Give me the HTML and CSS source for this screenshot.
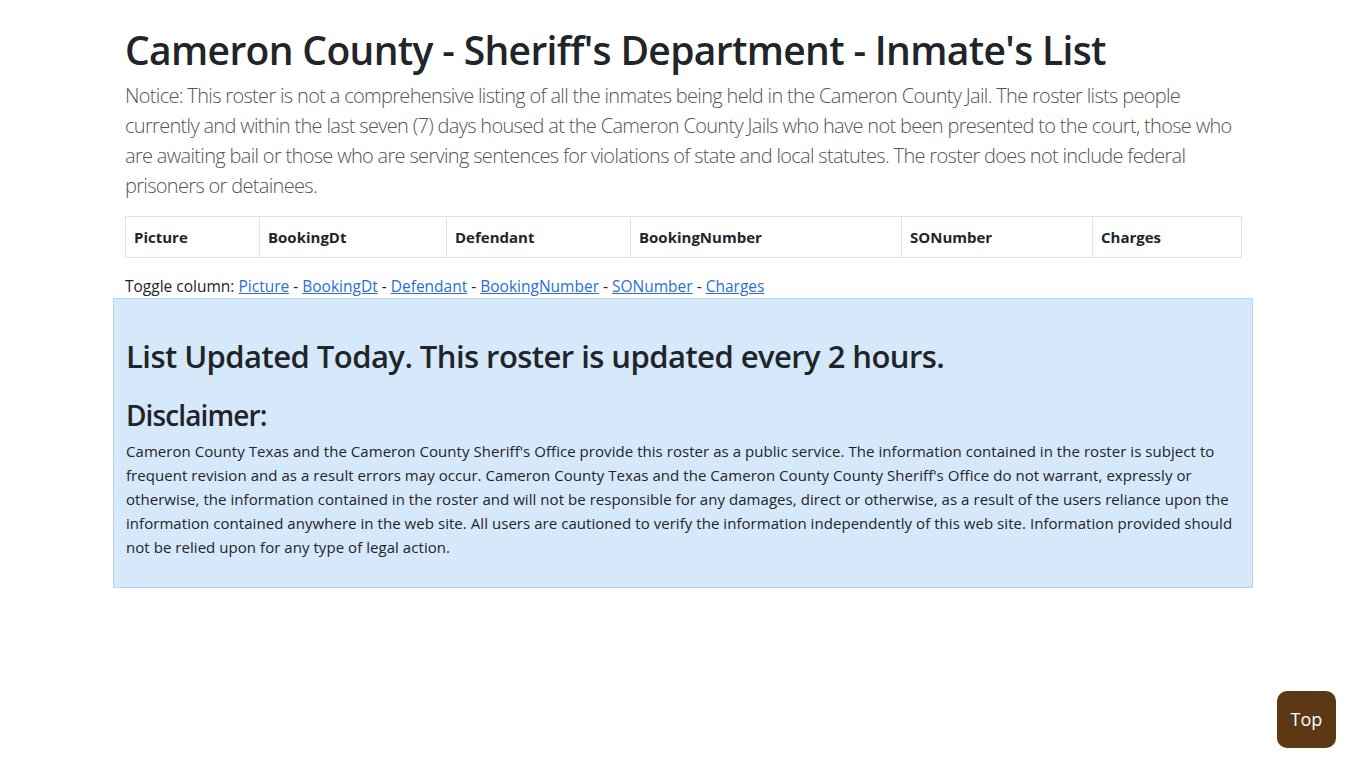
FILE: index.html
```html
<!DOCTYPE html>
<html lang="en">
<head>
  <meta charset="UTF-8">
  <meta name="viewport" content="width=device-width, initial-scale=1.0">
  <title>Cameron County - Sheriff's Department - Inmate's List</title>
  <link rel="stylesheet" href="styles.css">
</head>
<body>
  <div class="container">
    <h1>Cameron County - Sheriff's Department - Inmate's List</h1>
    <p class="lead">Notice: This roster is not a comprehensive listing of all the inmates being held in the Cameron County Jail. The roster lists people currently and within the last seven (7) days housed at the Cameron County Jails who have not been presented to the court, those who are awaiting bail or those who are serving sentences for violations of state and local statutes. The roster does not include federal prisoners or detainees.</p>

    <table class="roster">
      <thead>
        <tr>
          <th class="col-picture">Picture</th>
          <th class="col-date">BookingDt</th>
          <th class="col-defendant">Defendant</th>
          <th class="col-booking">BookingNumber</th>
          <th class="col-so">SONumber</th>
          <th class="col-charges">Charges</th>
        </tr>
      </thead>
      <tbody></tbody>
    </table>

    <div class="toggle">
      Toggle column: <a href="#">Picture</a> - <a href="#">BookingDt</a> - <a href="#">Defendant</a> - <a href="#">BookingNumber</a> - <a href="#">SONumber</a> - <a href="#">Charges</a>
    </div>
  </div>

  <div class="notice-box">
    <h2>List Updated Today. This roster is updated every 2 hours.</h2>
    <h3>Disclaimer:</h3>
    <p>Cameron County Texas and the Cameron County Sheriff's Office provide this roster as a public service. The information contained in the roster is subject to frequent revision and as a result errors may occur. Cameron County Texas and the Cameron County County Sheriff's Office do not warrant, expressly or otherwise, the information contained in the roster and will not be responsible for any damages, direct or otherwise, as a result of the users reliance upon the information contained anywhere in the web site. All users are cautioned to verify the information independently of this web site. Information provided should not be relied upon for any type of legal action.</p>
  </div>

  <a href="#" class="top-btn">Top</a>
</body>
</html>
```

FILE: styles.css
```css
body {
  margin: 0;
  font-family: "Open Sans", "Noto Sans", sans-serif;
  font-size: 16px;
  line-height: 1.5;
  color: #212529;
  background-color: #fff;
}
.container {
  max-width: 1116px;
  margin: 0 auto;
  padding: 26px 12px 0;
}
h1 {
  margin: 0 0 7px;
  font-size: 39px;
  font-weight: 600;
  line-height: 48px;
  letter-spacing: -0.65px;
}
.lead {
  margin: 0 0 15px;
  font-size: 20px;
  font-weight: 300;
  line-height: 30px;
  letter-spacing: -0.68px;
  color: #555;
}
.roster {
  width: 100%;
  table-layout: fixed;
  border-collapse: collapse;
  margin-bottom: 16px;
}
.roster th {
  box-sizing: border-box;
  padding: 8px;
  border: 1px solid #dee2e6;
  text-align: left;
  font-size: 15px;
  font-weight: 700;
  line-height: 24px;
}
.col-picture { width: 134px; }
.col-date { width: 187px; }
.col-defendant { width: 184px; }
.col-booking { width: 271px; }
.col-so { width: 191px; }
.col-charges { width: 149px; }
.toggle {
  font-size: 15.5px;
  line-height: 24px;
}
.toggle a {
  color: #2a6fd6;
}
.notice-box {
  max-width: 1114px;
  margin: 0 auto;
  padding: 38px 12px 12px;
  background-color: #d6e9fb;
  border: 1px solid #b8d6f5;
}
.notice-box h2 {
  margin: 0 0 23px;
  font-size: 31px;
  font-weight: 600;
  line-height: 38px;
  letter-spacing: -0.55px;
}
.notice-box h3 {
  margin: 0 0 7px;
  font-size: 28px;
  font-weight: 600;
  line-height: 34px;
  letter-spacing: -0.9px;
}
.notice-box p {
  margin: 0 0 16px;
  font-size: 15px;
  line-height: 24px;
  letter-spacing: 0.05px;
}
.top-btn {
  position: fixed;
  right: 30px;
  bottom: 20px;
  width: 59px;
  height: 57px;
  display: flex;
  align-items: center;
  justify-content: center;
  background-color: #5c3914;
  color: #fff;
  border-radius: 10px;
  font-size: 18px;
  text-decoration: none;
}
```
